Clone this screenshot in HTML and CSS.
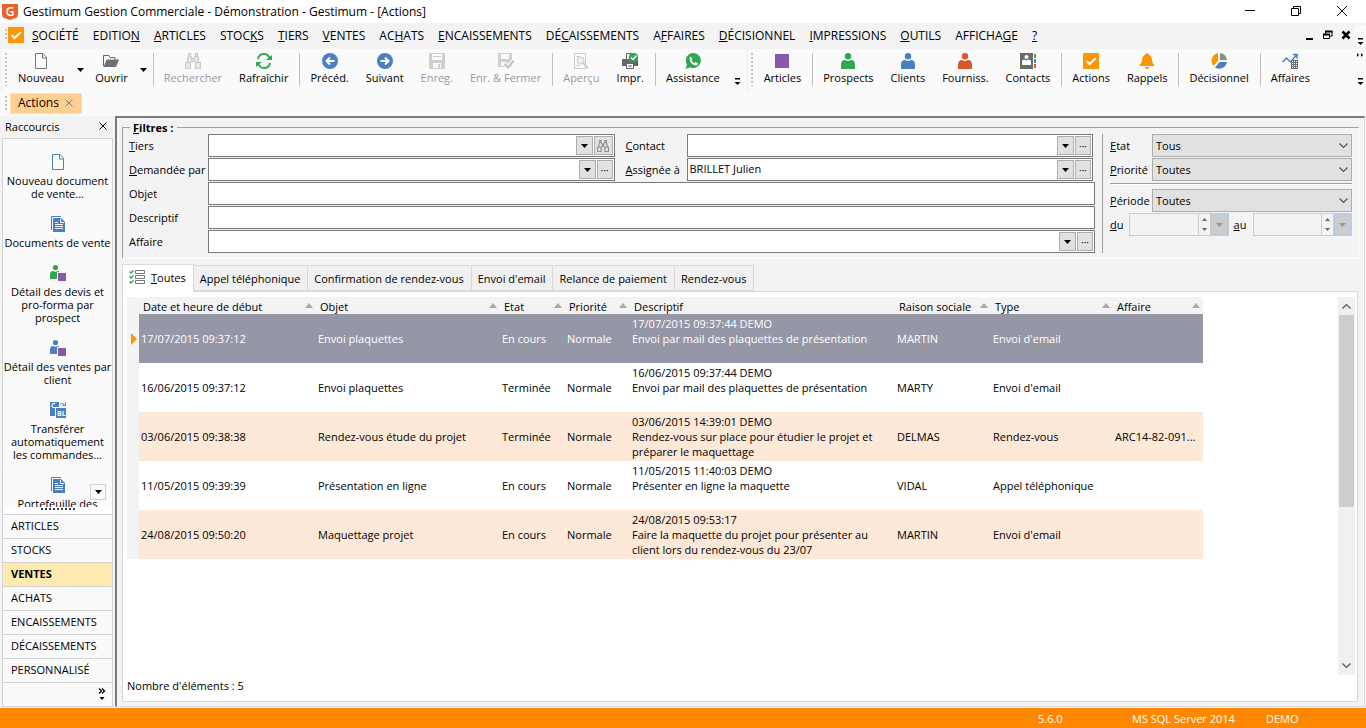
FILE: index.html
```html
<!DOCTYPE html>
<html lang="fr">
<head>
<meta charset="utf-8">
<title>Gestimum Gestion Commerciale</title>
<link rel="stylesheet" href="styles.css">
</head>
<body>
<svg class="defs" aria-hidden="true">
  <symbol id="person" viewBox="0 0 16 16"><circle cx="8" cy="3.2" r="3.2"/><path d="M1 16V12Q1 7 5 7Q8 9 11 7Q15 7 15 12V16Z"/></symbol>
  <symbol id="person-box" viewBox="0 0 16 16"><circle cx="5.5" cy="2.6" r="2.6"/><path d="M0 14V9.500Q0 6 3 6Q5.500 7.500 8 6Q9 6 9 7H7V14Z"/><path fill="#8957ab" d="M8 8h8v8H8z"/></symbol>
  <symbol id="binoc" viewBox="0 0 16 16"><path d="M3.500 3V.5h2V3M10.500 3V.5h2V3M2.500 9V5.500L3.500 3.500h2.500L7 5.500V9M13.500 9V5.500L12.500 3.500H10L9 5.500V9M7 5.500h2M7 8.500h2M.5 9.500h5v6h-5zM10.500 9.500h5v6h-5z" stroke="currentColor" stroke-width="1.200"/></symbol>
  <symbol id="down" viewBox="0 0 7 4"><path d="M0 0h7L3.500 4z"/></symbol>
  <symbol id="more" viewBox="0 0 7 8"><path d="M1 0h5v1.500H1zM0.500 4h6L3.500 7z"/></symbol>
  <symbol id="chev" viewBox="0 0 9 6"><path d="M0.500 0.500L4.500 4.500L8.500 0.500" fill="none" stroke="#555" stroke-width="1.200"/></symbol>
  <symbol id="doc" viewBox="0 0 16 16"><path d="M2.500 0.500H10L13.500 4.500V15.500H2.500ZM9.500 0.500V5H13.500" fill="none" stroke="currentColor"/></symbol>
  <symbol id="docs" viewBox="0 0 16 16"><path d="M1.500 14V0.500H11" fill="none" stroke="#4a7fc1"/><path fill="#4a7fc1" d="M3 2h8l4 4v10H3z"/><path d="M5 8.500h8M5 10.500h8M5 12.500h8M5 6.500h3M10.500 3v3.500H14" stroke="#fff" stroke-width=".9" fill="none"/></symbol>
</svg>

<header class="titlebar">
  <svg class="logo" viewBox="0 0 16 16"><path fill="#e8622c" d="M0 0H16V11Q16 13 14 14L8 16L2 14Q0 13 0 11Z"/><text x="8" y="12" text-anchor="middle">G</text></svg>
  <h1>Gestimum Gestion Commerciale - Démonstration - Gestimum - [Actions]</h1>
  <div class="winctl">
    <button aria-label="Réduire"><svg viewBox="0 0 12 12"><path d="M1 5.500h10"/></svg></button>
    <button aria-label="Restaurer"><svg viewBox="0 0 12 12"><path d="M1.500 3.500h7v7h-7zM3.500 3.500v-2h7v7h-2"/></svg></button>
    <button aria-label="Fermer"><svg viewBox="0 0 12 12"><path d="M1 1l10 10M11 1L1 11"/></svg></button>
  </div>
</header>

<nav class="menubar">
  <span class="grip"></span>
  <svg class="app" viewBox="0 0 16 16"><path fill="#ff9500" d="M0 0h16v16H0z"/><path d="M3.500 8l3 3L13 5" fill="none" stroke="#fff" stroke-width="2"/></svg>
  <button><u>S</u>OCIÉTÉ</button><button>EDITIO<u>N</u></button><button><u>A</u>RTICLES</button><button>STOC<u>K</u>S</button><button><u>T</u>IERS</button><button><u>V</u>ENTES</button><button>AC<u>H</u>ATS</button><button><u>E</u>NCAISSEMENTS</button><button>DÉ<u>C</u>AISSEMENTS</button><button>A<u>F</u>FAIRES</button><button><u>D</u>ÉCISIONNEL</button><button><u>I</u>MPRESSIONS</button><button><u>O</u>UTILS</button><button>AFFICHA<u>G</u>E</button><button><u>?</u></button>
  <div class="mdictl">
    <button aria-label="Réduire la fenêtre"><svg viewBox="0 0 10 10"><path d="M1 9h7" stroke-width="2"/></svg></button>
    <button aria-label="Restaurer la fenêtre"><svg viewBox="0 0 10 10"><path d="M.5 4.500h6v4h-6zM2.500 4V1.500h6.500V6H7"/><path d="M0 4.500h7M2 1.500h7.500" stroke-width="2"/></svg></button>
    <button aria-label="Fermer la fenêtre"><svg viewBox="0 0 10 10"><path d="M1.500 1.500l7 7M8.500 1.500l-7 7" stroke-width="2.600"/></svg></button>
  </div>
  <button class="overflow" aria-label="Options"><svg viewBox="0 0 7 8"><use href="#more"/></svg></button>
</nav>

<div class="toolbars">
  <div class="toolbar">
    <span class="grip"></span>
    <button class="tool"><svg viewBox="0 0 16 16" class="gray"><use href="#doc"/></svg>Nouveau</button>
    <button class="drop" aria-label="Menu Nouveau"><svg viewBox="0 0 7 4"><use href="#down"/></svg></button>
    <button class="tool"><svg viewBox="0 0 16 16"><path d="M.5 13V2.500H6l1 2h5V7" fill="none" stroke="#666"/><path fill="#707070" d="M3.500 6.500H16L13 14H.5z"/></svg>Ouvrir</button>
    <button class="drop" aria-label="Menu Ouvrir"><svg viewBox="0 0 7 4"><use href="#down"/></svg></button>
    <span class="sep"></span>
    <button class="tool" disabled><svg viewBox="0 0 16 16" class="pale" fill="#e8e8e8"><use href="#binoc"/></svg>Rechercher</button>
    <button class="tool"><svg viewBox="0 0 16 16" fill="none" stroke="#2fa84f" stroke-width="2"><path d="M2 6Q3 1 8 1Q12 1 13.500 5M14 10Q13 15 8 15Q4 15 2.500 11"/><path fill="#2fa84f" stroke="none" d="M16 2v5h-6zM0 14V9h6z"/></svg>Rafraîchir</button>
    <span class="sep"></span>
    <button class="tool"><svg viewBox="0 0 16 16"><circle cx="8" cy="8" r="8" fill="#4a7fc1"/><path d="M12.500 8H4.500M8 4.500L4.500 8L8 11.500" fill="none" stroke="#fff" stroke-width="2"/></svg>Précéd.</button>
    <button class="tool"><svg viewBox="0 0 16 16"><circle cx="8" cy="8" r="8" fill="#4a7fc1"/><path d="M3.500 8H11.500M8 4.500L11.500 8L8 11.500" fill="none" stroke="#fff" stroke-width="2"/></svg>Suivant</button>
    <button class="tool" disabled><svg viewBox="0 0 16 16"><path fill="#cfcfcf" d="M0 0h16v16H0z"/><path fill="#fafafa" d="M3 1h10v6H3zM4 10h8v5H4z"/><path fill="#cfcfcf" d="M9 11h2v4H9zM4 3h8v1H4z"/></svg>Enreg.</button>
    <button class="tool" disabled><svg viewBox="0 0 16 16"><path fill="#cfcfcf" d="M0 0h14v14H0z"/><path fill="#fafafa" d="M3 1h8v5H3zM3 9h6v4H3z"/><path d="M6 10l4 4l6-7" fill="none" stroke="#fafafa" stroke-width="4"/><path d="M6.500 10.500l3.500 4l6-7" fill="none" stroke="#c4c4c4" stroke-width="2"/></svg>Enr. &amp; Fermer</button>
    <span class="sep"></span>
    <button class="tool" disabled><svg viewBox="0 0 16 16" fill="none" stroke="#cacaca"><path d="M1.500.5h11v15h-11zM3.500 3.500h3M3.500 12.500h4"/><circle cx="7.500" cy="7.500" r="3.500" fill="#eee"/><path d="M10 10l5 5" stroke-width="2"/></svg>Aperçu</button>
    <button class="tool"><svg viewBox="0 0 16 16"><path d="M4.500 6V.5h7" fill="none" stroke="#666"/><path fill="#666" d="M0 6h16v7H0z"/><path d="M4.500 10.500h7v5h-7zM6 13h4" fill="#fafafa" stroke="#666"/><circle cx="11.500" cy="4.500" r="4.800" fill="#2fa84f"/><path d="M9 4.500l2 2l3.500-4" fill="none" stroke="#fff" stroke-width="1.400"/></svg>Impr.</button>
    <span class="sep"></span>
    <button class="tool"><svg viewBox="0 0 16 16"><path fill="#2fa84f" d="M8.500 0A7.500 7.500 0 1 1 5 14.200L.5 16L2 11.500A7.500 7.500 0 0 1 8.500 0Z"/><path fill="#fff" d="M6 3.500L7.500 6.500L6.500 7.500Q7.500 9.500 9.500 10L10.500 9L13 10.500Q12.500 12.500 10.500 12.500Q5 11 4.500 5.500Q4.500 4 6 3.500Z"/></svg>Assistance</button>
    <button class="overflow" aria-label="Options de barre"><svg viewBox="0 0 7 8"><use href="#more"/></svg></button>
  </div>
  <div class="toolbar grow">
    <span class="grip"></span>
    <button class="tool"><svg viewBox="0 0 16 16"><path fill="#8957ab" d="M1 1h14v14H1z"/></svg>Articles</button>
    <span class="sep"></span>
    <button class="tool"><svg viewBox="0 0 16 16" fill="#2fa84f"><use href="#person"/></svg>Prospects</button>
    <button class="tool"><svg viewBox="0 0 16 16" fill="#4a7fc1"><use href="#person"/></svg>Clients</button>
    <button class="tool"><svg viewBox="0 0 16 16" fill="#d9572f"><use href="#person"/></svg>Fourniss.</button>
    <button class="tool"><svg viewBox="0 0 16 16"><path fill="#6b6b6b" d="M0 0h13v16H0z"/><circle cx="6.500" cy="4" r="2" fill="#fff"/><path fill="#fff" d="M2 12V9Q2 6.500 4.500 6.500L6.500 7.500L8.500 6.500Q11 6.500 11 9V12Z"/><path fill="#2fa84f" d="M14 1h2v4h-2z"/><path fill="#4a7fc1" d="M14 6h2v4h-2z"/><path fill="#d9572f" d="M14 11h2v4h-2z"/></svg>Contacts</button>
    <span class="sep"></span>
    <button class="tool"><svg viewBox="0 0 16 16"><path fill="#ff9500" d="M0 0h16v16H0z"/><path d="M3.500 8l3 3L13 5" fill="none" stroke="#fff" stroke-width="2"/></svg>Actions</button>
    <button class="tool"><svg viewBox="0 0 16 16" fill="#ff9500"><circle cx="8" cy="1.500" r="1.500"/><path d="M8 1Q13 2 13 7Q13 10 15.500 12V13H.5V12Q3 10 3 7Q3 2 8 1ZM5.500 14h5Q10 16 8 16Q6 16 5.500 14Z"/></svg>Rappels</button>
    <span class="sep"></span>
    <button class="tool"><svg viewBox="0 0 16 16"><path fill="#ff9500" d="M7 8V0A8 8 0 0 0 2.500 13Z"/><path fill="#8a8a8a" d="M9 0A7.500 7.500 0 0 1 16 7H9Z"/><path fill="#4a7fc1" d="M8.500 9H16A8 8 0 0 1 4 14.500Z"/></svg>Décisionnel</button>
    <span class="sep"></span>
    <button class="tool"><svg viewBox="0 0 16 16"><path d="M.5 9L4.500 5L8.500 9L14.500 2M11 1.500h4v4" fill="none" stroke="#4a7fc1" stroke-width="1.500"/><path fill="#6b6b6b" d="M9 7h7v9H9z"/><path d="M10 8.500h5M10 10.500h5M10 12.500h5M10 14.500h5" stroke="#fff" stroke-dasharray="1 1"/></svg>Affaires</button>
    <div class="ends"><svg viewBox="0 0 7 4"><path d="M0 0l2 2l-2 2zM4 0l2 2l-2 2z"/></svg><svg class="tall" viewBox="0 0 7 8"><use href="#more"/></svg></div>
  </div>
</div>

<div class="doctabs"><span class="grip"></span><button class="doctab">Actions <svg viewBox="0 0 8 8"><path d="M.5.5l7 7M7.500.5l-7 7"/></svg></button></div>

<main class="work">
  <aside class="sidebar">
    <div class="side-head"><span>Raccourcis</span><button aria-label="Fermer les raccourcis"><svg viewBox="0 0 8 8"><path d="M.5.5l7 7M7.500.5l-7 7"/></svg></button></div>
    <div class="shortcuts">
      <div class="links">
      <a href="#"><svg viewBox="0 0 16 16" class="blue"><use href="#doc"/></svg>Nouveau document de vente...</a>
      <a href="#"><svg viewBox="0 0 16 16"><use href="#docs"/></svg>Documents de vente</a>
      <a href="#"><svg viewBox="0 0 16 16" fill="#2fa84f"><use href="#person-box"/></svg>Détail des devis et pro-forma par prospect</a>
      <a href="#"><svg viewBox="0 0 16 16" fill="#4a7fc1"><use href="#person-box"/></svg>Détail des ventes par client</a>
      <a href="#"><svg viewBox="0 0 16 16"><path fill="#4a7fc1" d="M0 0h9v5H5v9H0zM6 6h10v10H6z"/><text x="1" y="6" class="mini">C</text><text x="7" y="13.500" class="mini">BL</text><path d="M10 2.500Q13 0 15 4M12.500 3.500h3v-3" fill="none" stroke="#4a7fc1"/></svg>Transférer automatiquement les commandes...</a>
      <a href="#"><svg viewBox="0 0 16 16"><use href="#docs"/></svg>Portefeuille des</a>
      </div>
      <button class="scroll" aria-label="Suite"><svg viewBox="0 0 7 4"><use href="#down"/></svg></button>
    </div>
    <div class="splitter"></div>
    <nav class="groups">
      <button>ARTICLES</button><button>STOCKS</button><button class="on">VENTES</button><button>ACHATS</button><button>ENCAISSEMENTS</button><button>DÉCAISSEMENTS</button><button>PERSONNALISÉ</button>
      <button class="last" aria-label="Autres"><svg viewBox="0 0 8 12"><path d="M1 .5l2.500 2.500L1 5.500M4 .5l2.500 2.500L4 5.500" fill="none" stroke="#000" stroke-width="1.300"/><path d="M1.500 9h5L4 12z"/></svg></button>
    </nav>
  </aside>

  <section class="content">
    <fieldset class="filters">
      <legend><u>F</u>iltres :</legend>
      <div class="fields">
        <div class="pair">
          <label for="tiers"><u>T</u>iers</label>
          <div class="combo"><input id="tiers"><button aria-label="Liste des tiers"><svg viewBox="0 0 7 4"><use href="#down"/></svg></button><button class="wide" aria-label="Rechercher un tiers"><svg class="bin gray" viewBox="0 0 16 16" fill="none"><use href="#binoc"/></svg></button></div>
          <label class="second" for="contact"><u>C</u>ontact</label>
          <div class="combo"><input id="contact"><button aria-label="Liste des contacts"><svg viewBox="0 0 7 4"><use href="#down"/></svg></button><button aria-label="Choisir un contact">···</button></div>
        </div>
        <div class="pair">
          <label for="dem"><u>D</u>emandée par</label>
          <div class="combo"><input id="dem"><button aria-label="Liste des demandeurs"><svg viewBox="0 0 7 4"><use href="#down"/></svg></button><button aria-label="Choisir un demandeur">···</button></div>
          <label class="second" for="ass"><u>A</u>ssignée à</label>
          <div class="combo"><input id="ass" value="BRILLET Julien"><button aria-label="Liste des collaborateurs"><svg viewBox="0 0 7 4"><use href="#down"/></svg></button><button aria-label="Choisir un collaborateur">···</button></div>
        </div>
        <div class="single"><label for="obj">Objet</label><div class="combo"><input id="obj"></div></div>
        <div class="single"><label for="desc">Descriptif</label><div class="combo"><input id="desc"></div></div>
        <div class="single"><label for="aff">Affaire</label><div class="combo"><input id="aff"><button aria-label="Liste des affaires"><svg viewBox="0 0 7 4"><use href="#down"/></svg></button><button aria-label="Choisir une affaire">···</button></div></div>
      </div>
      <div class="status">
        <div class="opt"><label for="etat"><u>E</u>tat</label><span class="sel"><select id="etat"><option>Tous</option></select><svg viewBox="0 0 9 6"><use href="#chev"/></svg></span></div>
        <div class="opt"><label for="prio"><u>P</u>riorité</label><span class="sel"><select id="prio"><option>Toutes</option></select><svg viewBox="0 0 9 6"><use href="#chev"/></svg></span></div>
        <hr>
        <div class="opt"><label for="per"><u>P</u>ériode</label><span class="sel"><select id="per"><option>Toutes</option></select><svg viewBox="0 0 9 6"><use href="#chev"/></svg></span></div>
        <div class="dates">
          <label for="du"><u>d</u>u</label>
          <span class="date"><input id="du" disabled><span class="spin"><svg viewBox="0 0 5 3"><path d="M0 3h5L2.500 0z"/></svg><svg viewBox="0 0 5 3"><path d="M0 0h5L2.500 3z"/></svg></span><button disabled aria-label="Calendrier du"><svg viewBox="0 0 7 4"><use href="#down"/></svg></button></span>
          <label for="au"><u>a</u>u</label>
          <span class="date"><input id="au" disabled><span class="spin"><svg viewBox="0 0 5 3"><path d="M0 3h5L2.500 0z"/></svg><svg viewBox="0 0 5 3"><path d="M0 0h5L2.500 3z"/></svg></span><button disabled aria-label="Calendrier au"><svg viewBox="0 0 7 4"><use href="#down"/></svg></button></span>
        </div>
      </div>
    </fieldset>

    <div class="tabs">
      <button class="active"><svg viewBox="0 0 16 15"><path d="M6.500.5h9v3h-9zM6.500 5.500h9v3h-9zM6.500 10.500h9v3h-9z" fill="#fff" stroke="#777"/><path d="M.5 1.500l1.500 1.500L4.500.5M.5 6.500l1.500 1.500L4.500 5.500M.5 11.500l1.500 1.500l2.500-2.500" fill="none" stroke="#2fa84f" stroke-width="1.500"/></svg><span><u>T</u>outes</span></button><button>Appel téléphonique</button><button>Confirmation de rendez-vous</button><button>Envoi d'email</button><button>Relance de paiement</button><button>Rendez-vous</button>
    </div>

    <div class="panel">
      <div class="listing">
        <table>
          <colgroup><col class="c0"><col class="c1"><col class="c2"><col class="c3"><col class="c3"><col class="c5"><col class="c6"><col class="c7"><col class="c8"></colgroup>
          <thead><tr><th></th><th><span>Date et heure de début</span></th><th><span>Objet</span></th><th><span>Etat</span></th><th><span>Priorité</span></th><th class="nosort"><span>Descriptif</span></th><th><span>Raison sociale</span></th><th><span>Type</span></th><th><span>Affaire</span></th></tr></thead>
          <tbody>
            <tr class="sel-row"><td><svg viewBox="0 0 6 12"><path fill="#ff9500" d="M0 0l6 6l-6 6z"/></svg></td><td>17/07/2015 09:37:12</td><td>Envoi plaquettes</td><td>En cours</td><td>Normale</td><td class="memo">17/07/2015 09:37:44 DEMO<br>Envoi par mail des plaquettes de présentation</td><td>MARTIN</td><td>Envoi d'email</td><td></td></tr>
            <tr><td></td><td>16/06/2015 09:37:12</td><td>Envoi plaquettes</td><td>Terminée</td><td>Normale</td><td class="memo">16/06/2015 09:37:44 DEMO<br>Envoi par mail des plaquettes de présentation</td><td>MARTY</td><td>Envoi d'email</td><td></td></tr>
            <tr><td></td><td>03/06/2015 09:38:38</td><td>Rendez-vous étude du projet</td><td>Terminée</td><td>Normale</td><td class="memo">03/06/2015 14:39:01 DEMO<br>Rendez-vous sur place pour étudier le projet et préparer le maquettage</td><td>DELMAS</td><td>Rendez-vous</td><td>ARC14-82-091...</td></tr>
            <tr><td></td><td>11/05/2015 09:39:39</td><td>Présentation en ligne</td><td>En cours</td><td>Normale</td><td class="memo">11/05/2015 11:40:03 DEMO<br>Présenter en ligne la maquette</td><td>VIDAL</td><td>Appel téléphonique</td><td></td></tr>
            <tr><td></td><td>24/08/2015 09:50:20</td><td>Maquettage projet</td><td>En cours</td><td>Normale</td><td class="memo">24/08/2015 09:53:17<br>Faire la maquette du projet pour présenter au client lors du rendez-vous du 23/07</td><td>MARTIN</td><td>Envoi d'email</td><td></td></tr>
          </tbody>
        </table>
        <div class="vscroll"><svg class="up" viewBox="0 0 9 6"><use href="#chev"/></svg><span class="thumb"></span><svg viewBox="0 0 9 6"><use href="#chev"/></svg></div>
      </div>
      <p class="count">Nombre d'éléments : 5</p>
    </div>
  </section>
</main>

<footer class="statusbar"><span class="version">5.6.0</span><span class="server">MS SQL Server 2014</span><span class="base">DEMO</span></footer>
</body>
</html>
```
FILE: styles.css
```css
* { box-sizing: border-box; }
body {
  margin: 0;
  height: 100vh;
  display: flex;
  flex-direction: column;
  background: #f3f3f3;
  color: #000;
  font: 11px/15px "Open Sans", "Noto Sans", sans-serif;
  overflow: hidden;
}
button, input, select { font: inherit; color: inherit; margin: 0; padding: 0; border: 0; background: none; border-radius: 0; }
button { white-space: nowrap; }
svg { display: block; flex: none; }
.defs { position: absolute; width: 0; height: 0; }
.grip { width: 2px; align-self: stretch; background: repeating-linear-gradient(#c4c4c4 0 2px, transparent 2px 4px); flex: none; }

.titlebar { display: flex; align-items: center; height: 23px; background: #fff; padding-left: 2px; flex: none; }
.logo { width: 16px; height: 16px; margin-right: 5px; }
.logo text { fill: #fff; font-size: 12px; font-weight: 600; }
.titlebar h1 { margin: 0; font-size: 12px; font-weight: 400; flex: 1; }
.winctl { display: flex; align-items: center; padding: 0 1px 2px 0; }
.winctl button { width: 46px; display: grid; place-items: center; }
.winctl svg { width: 12px; height: 12px; fill: none; stroke: #000; }

.menubar { display: flex; align-items: center; height: 26px; padding: 0 0 2px 5px; flex: none; }
.menubar > .grip { height: 12px; align-self: center; }
.menubar .app { width: 16px; height: 16px; margin: 0 1px; }
.menubar > button:not(.overflow) { padding: 0 7px; font-size: 12px; }
.mdictl { display: flex; gap: 8px; margin-left: auto; }
.mdictl svg { width: 10px; height: 10px; fill: none; stroke: #000; stroke-width: 1; }
.menubar .overflow { width: 11px; margin-left: 4px; height: 21px; background: #fafafa; }

.toolbars { display: flex; gap: 2px; height: 42px; padding-left: 2px; flex: none; }
.toolbar { display: flex; align-items: stretch; background: #fafafa; padding: 4px 0 5px 3px; border-radius: 3px; }
.toolbar.grow { flex: 1; }
.toolbar .grip { margin-right: 3px; }
.tool { display: flex; flex-direction: column; align-items: center; justify-content: flex-start; gap: 1px; padding: 0 9px 0 8px; line-height: 15px; }
.tool svg { width: 16px; height: 16px; }
.tool:disabled { color: #9a9a9a; }
.gray { color: #777; }
.blue { color: #4a7fc1; }
.pale { color: #cacaca; }
.drop { width: 14px; display: grid; place-items: center; }
.drop svg, .combo svg { width: 7px; height: 4px; }
.sep { width: 1px; margin: 0 2px; background: #c0c0c0; }
.overflow { display: flex; flex-direction: column; justify-content: flex-end; align-items: center; width: 17px; }
.overflow svg { width: 7px; height: 8px; }
.ends { margin-left: auto; display: flex; flex-direction: column; justify-content: space-between; padding-right: 2px; }
.ends svg { width: 7px; height: 4px; }
.ends .tall { height: 8px; }

.doctabs { display: flex; height: 25px; background: #fafafa; padding: 2px 0 2px 5px; flex: none; }
.doctabs .grip { margin: 3px 3px 3px 0; }
.doctab { display: flex; align-items: center; gap: 6px; background: #ffcf8f; border: 1px solid #ffe3a8; padding: 0 8px 2px 7px; font-size: 12px; }
.doctab svg { width: 8px; height: 8px; stroke: #6d8296; }

.work { flex: 1; min-height: 0; display: flex; gap: 2px; padding: 0 1px 1px 2px; }
.sidebar { width: 111px; flex: none; display: flex; flex-direction: column; }
.side-head { height: 22px; display: flex; align-items: center; justify-content: space-between; padding: 0 6px 2px 3px; flex: none; }
.side-head svg { width: 8px; height: 8px; stroke: #000; }
.shortcuts { flex: 1; min-height: 0; border: 1px solid #d4d4d4; border-bottom: 0; background: #fafafa; position: relative; }
.links { height: 100%; overflow: hidden; padding-top: 15px; }
.shortcuts a { display: flex; flex-direction: column; align-items: center; gap: 4px; color: #000; text-decoration: none; text-align: center; line-height: 13px; padding-bottom: 16px; }
.shortcuts a svg { width: 16px; height: 16px; }
.mini { font-size: 7px; font-weight: 700; fill: #fff; }
.scroll { position: absolute; right: 6px; bottom: 7px; width: 16px; height: 16px; border: 1px solid #d4d4d4; background: #fafafa; display: grid; place-items: center; }
.scroll svg { width: 7px; height: 4px; }
.splitter { height: 7px; background: repeating-linear-gradient(90deg, #345 0 2px, transparent 2px 4px) 38px 1px / 34px 2px no-repeat, #fff; border: 0 solid #d4d4d4; border-width: 0 1px; flex: none; }
.groups { display: flex; flex-direction: column; border: 1px solid #d4d4d4; border-top: 0; background: #fafafa; }
.groups button { height: 24px; border-top: 1px solid #d4d4d4; text-align: left; padding: 0 0 2px 8px; }
.groups .on { background: #ffebb0; font-weight: 700; }
.groups .last { display: flex; align-items: center; justify-content: flex-end; padding-right: 6px; }
.groups .last svg { width: 8px; height: 12px; }

.content { flex: 1; min-width: 0; border: 1px solid #dcdcdc; border-top: 2px solid #7a7a7a; border-left: 2px solid #7a7a7a; padding: 3px 5px 4px 5px; display: flex; flex-direction: column; }
.filters { margin: 0; border: 1px solid #a0a0a0; border-right-color: #fff; border-bottom-color: #fff; padding: 0 6px 5px; display: flex; min-width: 0; min-height: 0; }
.filters legend { font-weight: 700; padding: 0 3px; margin-left: 1px; line-height: 13px; }
.fields { flex: 1; display: grid; gap: 1px; min-width: 0; }
.pair { display: grid; grid-template-columns: 79px 1fr 72px 1fr; padding-right: 2px; }
.single { display: grid; grid-template-columns: 79px 1fr; }
.fields label { align-self: center; }
.fields label.second { padding-left: 11px; }
.combo { display: flex; gap: 1px; height: 23px; background: #fff; border: 1px solid #7a7a7a; padding: 1px; min-width: 0; }
.combo input { flex: 1; min-width: 0; padding: 0 1px 2px; outline: 0; }
.combo button { width: 17px; border: 1px solid #adadad; background: #e1e1e1; display: grid; place-items: center; font-size: 10px; line-height: 12px; }
.combo button + button { width: 16px; }
.combo button.wide { width: 19px; }
.combo .bin { width: 12px; height: 12px; }
.status { width: 250px; flex: none; margin-left: 7px; border-left: 1px solid #a0a0a0; padding-left: 7px; display: flex; flex-direction: column; gap: 1px; }
.opt { display: grid; grid-template-columns: 42px 1fr; align-items: center; }
.sel { position: relative; }
.sel select { appearance: none; width: 100%; height: 23px; display: block; background: #e1e1e1; border: 1px solid #adadad; padding-left: 3px; }
.sel svg { position: absolute; right: 4px; top: 9px; width: 9px; height: 6px; pointer-events: none; }
.status hr { margin: 1px 0 3px; width: 100%; border: 0; height: 2px; border-top: 1px solid #a0a0a0; background: #fff; }
.dates { display: grid; grid-template-columns: 19px 1fr 24px 1fr; align-items: center; }
.dates label + .date + label { padding-left: 5px; }
.date { display: flex; height: 23px; border: 1px solid #ccc; background: #f3f3f3; min-width: 0; }
.date input { flex: 1; min-width: 0; }
.spin { width: 13px; display: grid; grid-template-rows: 1fr 1fr; border: 1px solid #ccc; border-width: 0 1px; place-items: center; }
.spin svg { width: 5px; height: 3px; fill: #666; }
.date button { width: 17px; background: #ccc; border: 1px solid #b4cbe4; display: grid; place-items: center; }
.date button svg { width: 7px; height: 4px; fill: #999; }

.tabs { display: flex; align-items: flex-end; margin-top: 4px; height: 28px; flex: none; }
.tabs button { height: 26px; border: 1px solid #d9d9d9; border-left: 0; background: #f0f0f0; padding: 0 7px 0 6px; }
.tabs .active { height: 28px; margin-bottom: -1px; background: #fff; border-left: 1px solid #d9d9d9; border-bottom: 0; display: flex; align-items: center; gap: 6px; padding: 0 7px 3px 6px; position: relative; }
.tabs .active svg { width: 16px; height: 15px; }
.panel { flex: 1; min-height: 0; border: 1px solid #d9d9d9; background: #fff; padding: 5px 2px 8px 4px; display: flex; flex-direction: column; margin-right: 1px; }
.listing { flex: 1; min-height: 0; display: flex; justify-content: space-between; }
table { border-collapse: collapse; table-layout: fixed; width: 1076px; align-self: flex-start; flex: none; }
.c0 { width: 12px; } .c1 { width: 177px; } .c2 { width: 184px; } .c3 { width: 65px; } .c5 { width: 265px; } .c6 { width: 96px; } .c7 { width: 122px; } .c8 { width: 90px; }
th { height: 17px; padding: 2px 0 0 4px; background: #f3f3f3; font-weight: 400; text-align: left; line-height: 15px; white-space: nowrap; position: relative; }
th:not(:first-child):not(.nosort)::after { content: ""; position: absolute; right: 3px; top: 6px; border: 4px solid transparent; border-top: 0; border-bottom: 5px solid #aaa; }
td { height: 49px; padding: 0 0 0 2px; line-height: 15px; vertical-align: middle; white-space: nowrap; }
td:first-child { background: #f3f3f3; padding-left: 4px; }
td svg { width: 6px; height: 12px; }
.memo { vertical-align: top; padding-top: 2px; white-space: normal; }
tbody tr:nth-child(odd) { background: #fee8d8; }
tbody .sel-row:nth-child(odd) { background: #9697a6; color: #fff; }
.vscroll { width: 17px; background: #f0f0f0; display: flex; flex-direction: column; align-items: center; flex: none; padding: 6px 0; }
.vscroll svg { width: 9px; height: 6px; margin-top: auto; }
.vscroll .up { transform: rotate(180deg); margin: 0; }
.thumb { width: 15px; height: 192px; background: #cdcdcd; margin-top: 6px; }
.count { margin: 3px 0 0; line-height: 15px; }

.statusbar { height: 20px; background: #ff8800; color: #fff; display: flex; justify-content: flex-end; align-items: center; padding-right: 2px; flex: none; }
.version { width: 94px; }
.server { width: 134px; }
.base { width: 98px; }
```
